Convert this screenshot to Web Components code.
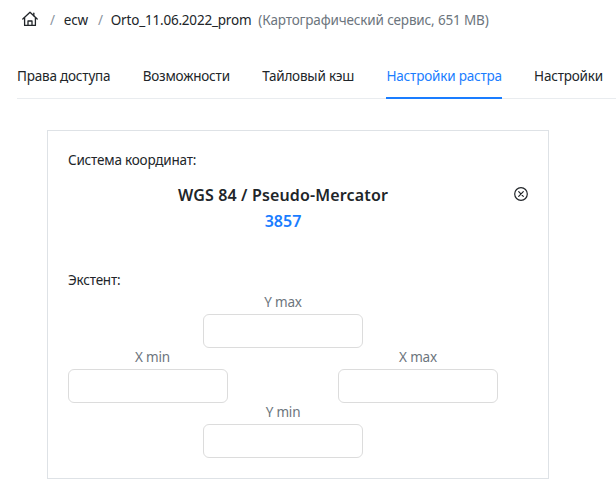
<!DOCTYPE html>
<html lang="ru">
<head>
<meta charset="utf-8">
<title>Настройки растра</title>
<style>
  html, body { margin: 0; height: 100%; overflow: hidden; background: #fff; }
  body { font: 13.5px/20px "Noto Sans", "Open Sans", sans-serif; letter-spacing: -0.2px; color: #212529; }
</style>
</head>
<body>
<x-page>
  <x-crumbs slot="crumbs">
    <x-crumb>ecw</x-crumb>
    <x-crumb>Orto_11.06.2022_prom</x-crumb>
    <small slot="note">(Картографический сервис, 651 MB)</small>
  </x-crumbs>
  <x-tabs slot="tabs">
    <x-tab>Права доступа</x-tab>
    <x-tab>Возможности</x-tab>
    <x-tab>Тайловый кэш</x-tab>
    <x-tab active>Настройки растра</x-tab>
    <x-tab>Настройки</x-tab>
  </x-tabs>
  <x-raster-card>
    <x-crs name="WGS 84 / Pseudo-Mercator" code="3857"></x-crs>
    <x-extent></x-extent>
  </x-raster-card>
</x-page>

<script>
// small helper, every element below is just a template + a shadow root
function shadow(el, html) {
  el.attachShadow({ mode: "open" }).innerHTML = html;
}

class XPage extends HTMLElement {
  connectedCallback() {
    shadow(this, `
      <style>
        :host { display: block; }
        .top { padding: 10px 0 0 22px; height: 48px; box-sizing: border-box; }
        .tabs { padding: 9px 0 0 17px; }
        .body { padding: 31px 0 0 47px; }
      </style>
      <div class="top"><slot name="crumbs"></slot></div>
      <div class="tabs"><slot name="tabs"></slot></div>
      <div class="body"><slot></slot></div>
    `);
  }
}

class XCrumbs extends HTMLElement {
  connectedCallback() {
    shadow(this, `
      <style>
        :host { display: flex; align-items: center; height: 20px; white-space: nowrap; }
        svg { width: 16px; height: 16px; display: block; margin-top: -3px; margin-right: 2px; }
        ::slotted(small) { font-size: inherit; letter-spacing: -0.15px; color: #6c757d; margin-left: 7px; }
      </style>
      <svg viewBox="0 0 16 16" fill="none" stroke="#212529" stroke-width="1.3" stroke-linejoin="round" stroke-linecap="round">
        <path d="M.8 8 8 1.2 15.2 8"/>
        <path d="M2.6 6.8v7.6h10.8V6.8"/>
        <path d="M6 14.4V10h4v4.4"/>
        <path d="M11.8 2.2v2.6"/>
      </svg>
      <slot></slot>
      <slot name="note"></slot>
    `);
  }
}

class XCrumb extends HTMLElement {
  connectedCallback() {
    shadow(this, `
      <style>
        :host { display: block; }
        span { color: #8a94a0; margin: 0 9px 0 10px; }
        :host(:not(:first-child)) span { margin-right: 8px; }
      </style>
      <span>/</span><slot></slot>
    `);
  }
}

class XTabs extends HTMLElement {
  connectedCallback() {
    shadow(this, `
      <style>
        :host { display: flex; gap: 32.3px; border-bottom: 1px solid #e9ecef; height: 42px; box-sizing: border-box; white-space: nowrap; }
      </style>
      <slot></slot>
    `);
  }
}

class XTab extends HTMLElement {
  connectedCallback() {
    shadow(this, `
      <style>
        :host { display: block; height: 42px; box-sizing: border-box; padding-top: 9px; color: #212529; }
        :host([active]) { color: #1a7dff; border-bottom: 2px solid #1a7dff; }
      </style>
      <slot></slot>
    `);
  }
}

class XRasterCard extends HTMLElement {
  connectedCallback() {
    shadow(this, `
      <style>
        :host { display: block; width: 502px; height: 349px; box-sizing: border-box; border: 1px solid #dee2e6; padding: 19px 20px 0; }
      </style>
      <slot></slot>
    `);
  }
}

class XCrs extends HTMLElement {
  connectedCallback() {
    const name = this.getAttribute("name");
    const code = this.getAttribute("code");
    shadow(this, `
      <style>
        :host { display: block; position: relative; height: 120px; }
        .label { height: 20px; margin-bottom: 12px; }
        .name, .code { text-align: center; font-weight: 600; font-size: 16px; margin-right: 30px; }
        .name { line-height: 26px; letter-spacing: 0.15px; }
        .code { line-height: 24px; margin-top: 1px; letter-spacing: 0; color: #1a7dff; }
        /* clear button sits over the title row */
        svg { position: absolute; right: 0; top: 37px; width: 14px; height: 14px; }
      </style>
      <div class="label">Система координат:</div>
      <div class="name">${name}</div>
      <div class="code">${code}</div>
      <svg viewBox="0 0 14 14" fill="none" stroke="#212529" stroke-width="1.2" stroke-linecap="round">
        <circle cx="7" cy="7" r="6.3"/>
        <path d="M4.7 4.7l4.6 4.6M9.3 4.7l-4.6 4.6"/>
      </svg>
    `);
  }
}

class XCoord extends HTMLElement {
  connectedCallback() {
    shadow(this, `
      <style>
        :host { display: block; width: 160px; text-align: center; }
        label { display: block; height: 21px; line-height: 19px; color: #6c757d; }
        :host([nudge]) label { padding-left: 9px; box-sizing: border-box; }
        input { display: block; width: 100%; height: 34px; box-sizing: border-box; border: 1px solid #dcdcdc; border-radius: 6px; background: #fff; outline: none; }
      </style>
      <label for="f">${this.getAttribute("label")}</label>
      <input id="f" type="text">
    `);
  }
}

class XExtent extends HTMLElement {
  connectedCallback() {
    shadow(this, `
      <style>
        :host { display: block; width: 430px; }
        .label { height: 20px; margin-bottom: 3px; }
        .row { display: flex; justify-content: center; }
        .row.wide { justify-content: space-between; }
      </style>
      <div class="label">Экстент:</div>
      <div class="row"><x-coord label="Y max"></x-coord></div>
      <div class="row wide"><x-coord label="X min" nudge></x-coord><x-coord label="X max"></x-coord></div>
      <div class="row"><x-coord label="Y min"></x-coord></div>
    `);
  }
}

customElements.define("x-page", XPage);
customElements.define("x-crumbs", XCrumbs);
customElements.define("x-crumb", XCrumb);
customElements.define("x-tabs", XTabs);
customElements.define("x-tab", XTab);
customElements.define("x-raster-card", XRasterCard);
customElements.define("x-crs", XCrs);
customElements.define("x-coord", XCoord);
customElements.define("x-extent", XExtent);
</script>
</body>
</html>
